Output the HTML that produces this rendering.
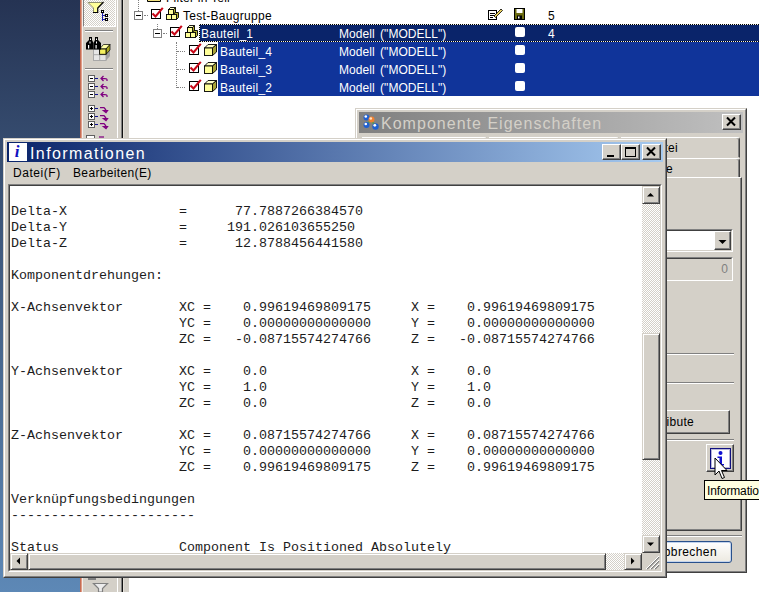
<!DOCTYPE html>
<html lang="de">
<head>
<meta charset="utf-8">
<title>Informationen</title>
<style>
*{box-sizing:border-box;margin:0;padding:0}
html,body{width:759px;height:592px;overflow:hidden;background:#fff}
body{position:relative;font-family:"Liberation Sans",sans-serif;font-size:12px;color:#000}
.abs{position:absolute}
#desk{left:0;top:0;width:80px;height:592px;background:linear-gradient(180deg,#253353 0px,#354b6e 138px,#48688f 360px,#5d88b6 592px)}
#orange{left:80px;top:0;width:2px;height:592px;background:linear-gradient(90deg,#b8553c,#ecb4a0)}
#tbar{left:82px;top:0;width:35px;height:592px;background:#d4d0c8;border-left:1px solid #f4f0ec}
#tstrip{left:117px;top:0;width:5px;height:592px;background:linear-gradient(90deg,#fff 0 1px,#d4d0c8 1px 4px,#808080 4px 5px)}
#tdark{left:122px;top:0;width:2px;height:592px;background:linear-gradient(90deg,#101010 0 1px,#e4e0d8 1px 2px)}
#tgap{left:124px;top:0;width:5px;height:592px;background:#d4d0c8}
#tree{left:129px;top:0;width:630px;height:592px;background:#fff}
.sep{left:85px;width:28px;height:2px;border-top:1px solid #808080;border-bottom:1px solid #fff}
.pressed{left:83px;top:-2px;width:33px;height:29px;border:1px solid;border-color:#808080 #fff #fff #808080;
 background-color:#fff;background-image:conic-gradient(#d4d0c8 25%,#fff 0 50%,#d4d0c8 0 75%,#fff 0);background-size:2px 2px}
.row{left:0;width:759px;height:18px;line-height:18px;font-size:12px;white-space:nowrap}
.sel{background:#10349a;color:#fff}
.sel1{background:#0a246a;color:#fff}
.t{position:absolute;top:1px;letter-spacing:.25px}
/* windows */
.win{background:#d4d0c8;border:1px solid;border-color:#d4d0c8 #404040 #404040 #d4d0c8}
.win>.in{position:absolute;left:0;top:0;right:0;bottom:0;border:1px solid;border-color:#fff #808080 #808080 #fff}
.btn{position:absolute;background:#d4d0c8;border:1px solid;border-color:#fff #404040 #404040 #fff;box-shadow:inset -1px -1px 0 #808080}
.sbtn{border-color:#d4d0c8 #404040 #404040 #d4d0c8;box-shadow:inset 1px 1px 0 #fff,inset -1px -1px 0 #808080}
.sunk{position:absolute;border:1px solid;border-color:#808080 #fff #fff #808080}
.sunk>.in2{position:absolute;left:0;top:0;right:0;bottom:0;border:1px solid;border-color:#404040 #d4d0c8 #d4d0c8 #404040}
.track{position:absolute;background-color:#fff;background-image:conic-gradient(#d4d0c8 25%,#fff 0 50%,#d4d0c8 0 75%,#fff 0);background-size:2px 2px}
pre{font-family:"Liberation Mono",monospace;font-size:13.33px;line-height:16px;letter-spacing:0;color:#1c1c1c}
.tab{border:1px solid;border-color:#fff #404040 #d4d0c8 #fff;border-radius:0 3px 0 0;box-shadow:inset -1px 0 0 #808080}
.hline{position:absolute;height:2px;border-top:1px solid #808080;border-bottom:1px solid #fff}
</style>
</head>
<body>
<div id="desk" class="abs"></div>
<div id="orange" class="abs"></div>
<div id="tbar" class="abs"></div>
<div id="tstrip" class="abs"></div>
<div id="tdark" class="abs"></div>
<div id="tgap" class="abs"></div>
<div id="tree" class="abs"></div>

<!-- TOOLBAR -->
<div class="abs pressed"></div>
<div class="abs sep" style="top:30px"></div>
<div class="abs sep" style="top:68px"></div>
<svg class="abs" style="left:82px;top:0" width="36" height="140" viewBox="0 0 36 140">
 <!-- funnel -->
 <path d="M6 2.500H21L15.500 8V12.500H11.500V8Z" fill="#ffff99"/>
 <path d="M11.500 12.500V8L6 2.500H21" fill="none" stroke="#909070" stroke-width="1"/>
 <path d="M21.500 2L15.700 8V12.500H11" fill="none" stroke="#000" stroke-width="1.200"/>
 <path d="M20.5 12 V21 M20.5 15.5 H24 M20.5 19.5 H24" stroke="#1a1aa8" stroke-width="1" fill="none"/>
 <rect x="19.5" y="10.5" width="2" height="2" fill="#fff" stroke="#000" stroke-width="1"/>
 <rect x="23.500" y="14.5" width="2" height="2" fill="#fff" stroke="#000" stroke-width="1"/>
 <rect x="23.500" y="18.5" width="2" height="2" fill="#fff" stroke="#000" stroke-width="1"/>
 <!-- binoculars + cube -->
 <g>
  <rect x="11.500" y="49" width="12.500" height="11.500" fill="#e6e6e6" stroke="#a8a8a8" stroke-width="1"/>
  <path d="M17.700 49V60.500M11.500 54.700H24" stroke="#a8a8a8" stroke-width="1" fill="none"/>
  <path d="M24 54.300L28 50V56L24 60.500Z" fill="#a0a0a0"/>
  <path d="M17.600 49L21.500 44.500H28L24 49Z" fill="#ffffa8" stroke="#000" stroke-width=".7"/>
  <path d="M24 49L28 44.500V50L24 54.300Z" fill="#a8a820" stroke="#000" stroke-width=".7"/>
  <rect x="17.600" y="49" width="6.400" height="5.300" fill="#f4f060" stroke="#000" stroke-width=".9"/>
  <path d="M7 37H10V40L11.500 43V49.600H4V43L7 40Z" fill="#000"/>
  <path d="M13 37H16V40L19 43V49.600H11.500V43L13 40Z" fill="#000"/>
  <rect x="6" y="45" width="1.200" height="3.500" fill="#fff"/><rect x="13.500" y="45" width="1.200" height="3.500" fill="#fff"/>
  <rect x="8" y="38.500" width="1" height="1.500" fill="#fff"/><rect x="14" y="38.500" width="1" height="1.500" fill="#fff"/>
  <rect x="7.500" y="41.500" width="1" height="2" fill="#fff"/><rect x="14" y="41.500" width="1" height="2" fill="#fff"/>
 </g>
 <!-- collapse -->
 <g fill="#fff" stroke="#606060" stroke-width="1">
  <rect x="6.500" y="75.500" width="6" height="6"/><rect x="6.500" y="83.500" width="6" height="6"/><rect x="6.500" y="91.500" width="6" height="6"/>
  <rect x="6.500" y="105.500" width="6" height="6"/><rect x="6.500" y="113.500" width="6" height="6"/><rect x="6.500" y="121.500" width="6" height="6"/>
  <rect x="4.500" y="135.500" width="8" height="8"/>
 </g>
 <g stroke="#000" stroke-width="1">
  <path d="M8 78.500H11M8 86.500H11M8 94.500H11"/>
  <path d="M8 108.500H11M9.500 107V110M8 116.500H11M9.500 115V118M8 124.500H11M9.500 123V126"/>
 </g>
 <g stroke="#101090" stroke-width="1"><path d="M13 78.500H16M13 86.500H16M13 94.500H16M13 108.500H16M13 116.500H16M13 124.500H16"/></g>
 <g stroke="#800080" stroke-width="1.250" fill="none">
  <path d="M25 81V79.500Q25 78.500 23 78.500H19M21.500 76L19 78.500L21.500 81"/>
  <path d="M25 89V87.500Q25 86.500 23 86.500H19M21.500 84L19 86.500L21.500 89"/>
  <path d="M25 97V95.500Q25 94.500 23 94.500H19M21.500 92L19 94.500L21.500 97"/>
  <path d="M18 107.500H22L24 110M21.500 110.500H25.500L24 112.500Z"/>
  <path d="M18 115.500H22L24 118M21.500 118.500H25.500L24 120.500Z"/>
  <path d="M18 123.500H22L24 126M21.500 126.500H25.500L24 128.500Z"/>
  <path d="M17 137H22"/>
 </g>
</svg>


<!-- bottom toolbar icon -->
<div class="abs" style="left:88px;top:578px;width:8px;height:2px;background:#808080"></div>
<svg class="abs" style="left:92px;top:582px" width="18" height="10" viewBox="0 0 18 10"><path d="M1.500 1.500H15.500L10.500 6.500V10H6.500V6.500Z" fill="#ececec" stroke="#808080" stroke-width="1.200"/></svg>
<!-- TREE ROWS -->
<div class="abs" style="left:138px;top:0;width:1px;height:11px;border-left:1px dotted #808080"></div>
<div class="abs" style="left:157px;top:24px;width:1px;height:5px;border-left:1px dotted #808080"></div>
<div class="abs" style="left:176px;top:42px;width:1px;height:46px;border-left:1px dotted #808080"></div>
<div class="abs" style="left:144px;top:15px;width:4px;height:1px;border-top:1px dotted #808080"></div>
<div class="abs" style="left:163px;top:33px;width:4px;height:1px;border-top:1px dotted #808080"></div>
<div class="abs" style="left:177px;top:51px;width:8px;height:1px;border-top:1px dotted #808080"></div>
<div class="abs" style="left:177px;top:69px;width:8px;height:1px;border-top:1px dotted #808080"></div>
<div class="abs" style="left:177px;top:87px;width:8px;height:1px;border-top:1px dotted #808080"></div>

<div class="abs row" style="top:-12px"><span class="t" style="left:166px">Filter in Teil</span></div>
<svg class="abs" style="left:147px;top:-9px" width="14" height="11" viewBox="0 0 14 11"><path d="M.5 2.500H5L6.500 4H13.500V10.500H.5Z" fill="#f0e080" stroke="#000"/></svg>

<div class="abs row" style="top:6px"><span class="t" style="left:183px;letter-spacing:.3px">Test-Baugruppe</span><span class="t" style="left:548px">5</span></div>
<div class="abs sel1" style="left:199px;top:24px;width:560px;height:18px"></div>
<div class="abs sel" style="left:218px;top:42px;width:541px;height:54px"></div>
<div class="abs" style="left:199px;top:24px;width:560px;height:1px;background:repeating-linear-gradient(90deg,#f4f4e8 0 1px,#000 1px 2px)"></div>
<div class="abs" style="left:199px;top:41px;width:560px;height:1px;background:repeating-linear-gradient(90deg,#f4f4e8 0 1px,#000 1px 2px)"></div>
<div class="abs" style="left:199px;top:24px;width:1px;height:18px;background:repeating-linear-gradient(180deg,#f4f4e8 0 1px,#000 1px 2px)"></div>
<div class="abs row" style="top:24px;color:#fff"><span class="t" style="left:201px">Bauteil_1</span><span class="t" style="left:339px;letter-spacing:.05px;word-spacing:2px">Modell ("MODELL")</span><span class="t" style="left:548px">4</span></div>
<div class="abs row" style="top:42px;color:#fff"><span class="t" style="left:220px">Bauteil_4</span><span class="t" style="left:339px;letter-spacing:.05px;word-spacing:2px">Modell ("MODELL")</span></div>
<div class="abs row" style="top:60px;color:#fff"><span class="t" style="left:220px">Bauteil_3</span><span class="t" style="left:339px;letter-spacing:.05px;word-spacing:2px">Modell ("MODELL")</span></div>
<div class="abs row" style="top:78px;color:#fff"><span class="t" style="left:220px">Bauteil_2</span><span class="t" style="left:339px;letter-spacing:.05px;word-spacing:2px">Modell ("MODELL")</span></div>
<div class="abs" style="left:134px;top:11px;width:9px;height:9px;border:1px solid #808080;background:#fff"><div class="abs" style="left:1px;top:3px;width:5px;height:1px;background:#000"></div></div>
<div class="abs" style="left:153px;top:29px;width:9px;height:9px;border:1px solid #808080;background:#fff"><div class="abs" style="left:1px;top:3px;width:5px;height:1px;background:#000"></div></div>
<div class="abs" style="left:515px;top:27px;width:10px;height:10px;background:#fff;border-radius:2px"></div>
<div class="abs" style="left:515px;top:45px;width:10px;height:10px;background:#fff;border-radius:2px"></div>
<div class="abs" style="left:515px;top:63px;width:10px;height:10px;background:#fff;border-radius:2px"></div>
<div class="abs" style="left:515px;top:81px;width:10px;height:10px;background:#fff;border-radius:2px"></div>
<svg class="abs" style="left:488px;top:8px" width="15" height="12" viewBox="0 0 15 12"><rect x=".5" y="2.500" width="8" height="9" fill="#fff" stroke="#000"/><path d="M2 5.500H7M2 7.500H7M2 9.500H5" stroke="#000"/><path d="M6 8L13 1L14.500 2.500L7.500 9.500Z" fill="#e8d060" stroke="#000" stroke-width=".8"/></svg>
<svg class="abs" style="left:514px;top:8px" width="12" height="12" viewBox="0 0 12 12"><rect x=".5" y=".5" width="10" height="11" fill="#6c6c10" stroke="#000"/><rect x="2.500" y="1" width="6" height="4" fill="#fff"/><rect x="3" y="7.500" width="5" height="4" fill="#000"/><rect x="4" y="8.500" width="1.500" height="2" fill="#fff"/></svg>


<svg class="abs" style="left:151px;top:7px" width="13" height="12" viewBox="0 0 13 12"><rect x=".5" y="2.500" width="9" height="9" fill="#fff" stroke="#000"/><path d="M1.500 6.500L4.500 9.500L11.800 .8" fill="none" stroke="#c80818" stroke-width="2.100"/></svg>
<svg class="abs" style="left:166px;top:7px" width="13" height="13" viewBox="0 0 13 13"><path d="M5.500 7.500L7.500 5.500H12.500V10.500L10.500 12.500Z" fill="#b4b030" stroke="#000" stroke-width=".9"/><path d="M2.500 2.500L4.500 .5H9.500V5L7.500 7.500H2.500Z" fill="#b4b030" stroke="#000" stroke-width=".9"/><path d="M2.500 2.500L4.500 .5H9.500L7.500 2.500Z" fill="#ffffc8" stroke="#000" stroke-width=".8"/><rect x="2.500" y="2.500" width="5" height="5" fill="#ffff99" stroke="#000" stroke-width=".9"/><rect x=".5" y="7.500" width="5" height="5" fill="#ffff99" stroke="#000" stroke-width=".9"/><rect x="5.500" y="7.500" width="5" height="5" fill="#ffff99" stroke="#000" stroke-width=".9"/></svg>
<svg class="abs" style="left:170px;top:25px" width="13" height="12" viewBox="0 0 13 12"><rect x=".5" y="2.500" width="9" height="9" fill="#fff" stroke="#000"/><path d="M1.500 6.500L4.500 9.500L11.800 .8" fill="none" stroke="#c80818" stroke-width="2.100"/></svg>
<svg class="abs" style="left:185px;top:25px" width="13" height="13" viewBox="0 0 13 13"><path d="M5.500 7.500L7.500 5.500H12.500V10.500L10.500 12.500Z" fill="#b4b030" stroke="#000" stroke-width=".9"/><path d="M2.500 2.500L4.500 .5H9.500V5L7.500 7.500H2.500Z" fill="#b4b030" stroke="#000" stroke-width=".9"/><path d="M2.500 2.500L4.500 .5H9.500L7.500 2.500Z" fill="#ffffc8" stroke="#000" stroke-width=".8"/><rect x="2.500" y="2.500" width="5" height="5" fill="#ffff99" stroke="#000" stroke-width=".9"/><rect x=".5" y="7.500" width="5" height="5" fill="#ffff99" stroke="#000" stroke-width=".9"/><rect x="5.500" y="7.500" width="5" height="5" fill="#ffff99" stroke="#000" stroke-width=".9"/></svg>
<svg class="abs" style="left:189px;top:43px" width="13" height="12" viewBox="0 0 13 12"><rect x=".5" y="2.500" width="9" height="9" fill="#fff" stroke="#000"/><path d="M1.500 6.500L4.500 9.500L11.800 .8" fill="none" stroke="#c80818" stroke-width="2.100"/></svg>
<svg class="abs" style="left:204px;top:44px" width="13" height="12" viewBox="0 0 13 12"><path d="M.5 4L4 .5H12.500L8.500 4Z" fill="#ffffc8" stroke="#000" stroke-width=".9"/><path d="M8.500 4L12.500 .5V8L8.500 11.500Z" fill="#a8a438" stroke="#000" stroke-width=".9"/><rect x=".5" y="4" width="8" height="7.500" fill="#ffff99" stroke="#000" stroke-width=".9"/></svg>
<svg class="abs" style="left:189px;top:61px" width="13" height="12" viewBox="0 0 13 12"><rect x=".5" y="2.500" width="9" height="9" fill="#fff" stroke="#000"/><path d="M1.500 6.500L4.500 9.500L11.800 .8" fill="none" stroke="#c80818" stroke-width="2.100"/></svg>
<svg class="abs" style="left:204px;top:62px" width="13" height="12" viewBox="0 0 13 12"><path d="M.5 4L4 .5H12.500L8.500 4Z" fill="#ffffc8" stroke="#000" stroke-width=".9"/><path d="M8.500 4L12.500 .5V8L8.500 11.500Z" fill="#a8a438" stroke="#000" stroke-width=".9"/><rect x=".5" y="4" width="8" height="7.500" fill="#ffff99" stroke="#000" stroke-width=".9"/></svg>
<svg class="abs" style="left:189px;top:79px" width="13" height="12" viewBox="0 0 13 12"><rect x=".5" y="2.500" width="9" height="9" fill="#fff" stroke="#000"/><path d="M1.500 6.500L4.500 9.500L11.800 .8" fill="none" stroke="#c80818" stroke-width="2.100"/></svg>
<svg class="abs" style="left:204px;top:80px" width="13" height="12" viewBox="0 0 13 12"><path d="M.5 4L4 .5H12.500L8.500 4Z" fill="#ffffc8" stroke="#000" stroke-width=".9"/><path d="M8.500 4L12.500 .5V8L8.500 11.500Z" fill="#a8a438" stroke="#000" stroke-width=".9"/><rect x=".5" y="4" width="8" height="7.500" fill="#ffff99" stroke="#000" stroke-width=".9"/></svg>
<!-- KOMP WINDOW -->
<div class="abs win" style="left:355px;top:108px;width:392px;height:465px"><div class="in"></div></div>
<div class="abs" style="left:359px;top:112px;width:384px;height:21px;background:linear-gradient(90deg,#808080,#c0c0c0)"></div>
<svg class="abs" style="left:362px;top:113px" width="18" height="18" viewBox="0 0 18 18">
 <path d="M4 4L9 7L4 12M9 7L14 14" stroke="#50a050" stroke-width="1.500" fill="none"/>
 <circle cx="4.500" cy="4.500" r="3" fill="#2060d0"/><circle cx="3.800" cy="3.500" r="1.300" fill="#fff"/>
 <circle cx="9.500" cy="6.500" r="3" fill="#f08030"/><circle cx="8.800" cy="5.500" r="1.300" fill="#ffe0c0"/>
 <circle cx="4.500" cy="12" r="3" fill="#2060d0"/><circle cx="3.800" cy="11" r="1.300" fill="#fff"/>
 <circle cx="13.500" cy="13.500" r="3.200" fill="#2060d0"/><circle cx="12.800" cy="12.300" r="1.400" fill="#fff"/>
</svg>
<div class="abs" style="left:381px;top:113px;height:21px;line-height:21px;font-size:16px;letter-spacing:1.02px;color:#d4d0c8;white-space:nowrap">Komponente Eigenschaften</div>
<div class="btn" style="left:722px;top:114px;width:19px;height:16px"></div>
<svg class="abs" style="left:722px;top:114px" width="19" height="16" viewBox="0 0 19 16"><path d="M5 3.500L13 11.500M13 3.500L5 11.500" stroke="#000" stroke-width="2"/></svg>
<!-- tabs -->
<div class="abs tab" style="left:362px;top:137px;width:125px;height:21px"></div>
<div class="abs tab" style="left:489px;top:137px;width:130px;height:21px"></div>
<div class="abs tab" style="left:621px;top:137px;width:119px;height:21px"></div>
<div class="abs tab" style="left:360px;top:158px;width:380px;height:20px"></div>
<div class="abs" style="right:81px;top:140px;line-height:16px;font-size:12px;letter-spacing:.3px">Datei</div>
<div class="abs" style="right:86px;top:161px;line-height:16px;font-size:12px;letter-spacing:.3px">Baugruppe</div>
<!-- tab panel -->
<div class="abs" style="left:600px;top:177px;width:142px;height:354px;border:1px solid;border-color:#fff #404040 #404040 #fff;box-shadow:inset -1px -1px 0 #808080"></div>
<!-- combo -->
<div class="sunk" style="left:600px;top:229px;width:133px;height:23px;background:#fff"><div class="in2"></div></div>
<div class="btn" style="left:714px;top:231px;width:17px;height:19px"></div>
<svg class="abs" style="left:714px;top:231px" width="17" height="19" viewBox="0 0 17 19"><path d="M4.500 9H12.500L8.500 13Z" fill="#000"/></svg>
<!-- disabled field -->
<div class="sunk" style="left:600px;top:257px;width:133px;height:24px"><div class="in2"></div></div>
<div class="abs" style="right:31px;top:261px;font-size:12px;line-height:16px;color:#808080">0</div>
<div class="hline" style="left:600px;top:353px;width:134px"></div>
<div class="hline" style="left:600px;top:382px;width:134px"></div>
<div class="hline" style="left:600px;top:439px;width:134px"></div>
<!-- attribute button -->
<div class="btn" style="left:600px;top:410px;width:130px;height:24px"></div>
<div class="abs" style="right:65px;top:414px;font-size:12px;line-height:16px;letter-spacing:.3px">Attribute</div>
<!-- info button -->
<div class="btn" style="left:706px;top:444px;width:28px;height:28px"></div>
<div class="abs" style="left:710px;top:448px;width:21px;height:21px;background:#fff;border:1px solid #101080;box-shadow:inset 0 0 0 1px rgba(16,16,128,.3)"></div>
<svg class="abs" style="left:710px;top:448px" width="21" height="21" viewBox="0 0 21 21"><circle cx="10.500" cy="5" r="2" fill="#1010d0"/><path d="M7.500 8.500H12V16H14V17.500H7.500V16H9.500V10H7.500Z" fill="#1010d0"/></svg>
<!-- bottom separator and Abbrechen -->
<div class="hline" style="left:600px;top:535px;width:142px"></div>
<div class="abs" style="left:600px;top:541px;width:132px;height:22px;border:1px solid #28508c;border-radius:3px;background:linear-gradient(180deg,#fff,#ece9e0);box-shadow:inset 0 0 0 1px #c4d4ec"></div>
<div class="abs" style="right:42px;top:544px;font-size:12px;line-height:16px;letter-spacing:.4px">Abbrechen</div>
<!-- tooltip -->
<div class="abs" style="left:704px;top:480px;width:60px;height:20px;background:#ffffe1;border:1px solid #000"></div>
<div class="abs" style="left:707px;top:483px;font-size:12px;line-height:16px;letter-spacing:-.15px;white-space:nowrap">Informationen</div>

<!-- INFO WINDOW -->
<div class="abs win" style="left:3px;top:138px;width:664px;height:440px"><div class="in"></div></div>
<div class="abs" style="left:7px;top:142px;width:656px;height:20px;background:linear-gradient(90deg,#0a246a,#a6caf0)"></div>
<div class="abs" style="left:9px;top:143px;width:18px;height:18px;background:#fff"></div>
<div class="abs" style="left:8px;top:142px;width:18px;height:20px;line-height:20px;text-align:center;font-family:'Liberation Serif',serif;font-style:italic;font-weight:bold;font-size:17px;color:#1010c0">i</div>
<div class="abs" style="left:30px;top:143px;height:20px;line-height:21px;font-size:16px;letter-spacing:1.4px;color:#fff;white-space:nowrap">Informationen</div>
<div class="btn" style="left:602px;top:144px;width:19px;height:16px"></div>
<div class="btn" style="left:621px;top:144px;width:19px;height:16px"></div>
<div class="btn" style="left:642px;top:144px;width:19px;height:16px"></div>
<svg class="abs" style="left:602px;top:144px" width="59" height="16" viewBox="0 0 59 16">
 <rect x="5" y="11" width="7" height="2" fill="#000"/>
 <rect x="23.500" y="3.500" width="10" height="9" fill="none" stroke="#000"/><rect x="23" y="3" width="11" height="2" fill="#000"/>
 <path d="M45 3.500L53 11.500M53 3.500L45 11.500" stroke="#000" stroke-width="2"/>
</svg>
<div class="abs" style="left:13px;top:165px;font-size:12px;line-height:16px;letter-spacing:.55px;white-space:nowrap">Datei(F)</div>
<div class="abs" style="left:73px;top:165px;font-size:12px;line-height:16px;letter-spacing:.35px;white-space:nowrap">Bearbeiten(E)</div>
<div class="sunk" style="left:8px;top:184px;width:654px;height:388px;background:#fff"><div class="in2"></div></div>
<!-- v scrollbar -->
<div class="track" style="left:642px;top:186px;width:18px;height:367px"></div>
<div class="btn sbtn" style="left:642px;top:186px;width:18px;height:18px"></div>
<div class="btn sbtn" style="left:642px;top:333px;width:18px;height:127px"></div>
<div class="btn sbtn" style="left:642px;top:535px;width:18px;height:18px"></div>
<svg class="abs" style="left:642px;top:186px" width="18" height="18" viewBox="0 0 18 18"><path d="M5 10.500H12L8.500 7Z" fill="#000"/></svg>
<svg class="abs" style="left:642px;top:535px" width="18" height="18" viewBox="0 0 18 18"><path d="M5 7.500H12L8.500 11Z" fill="#000"/></svg>
<!-- h scrollbar -->
<div class="track" style="left:10px;top:553px;width:632px;height:17px"></div>
<div class="btn sbtn" style="left:10px;top:553px;width:18px;height:17px"></div>
<div class="btn sbtn" style="left:28px;top:553px;width:578px;height:17px"></div>
<div class="btn sbtn" style="left:624px;top:553px;width:18px;height:17px"></div>
<svg class="abs" style="left:10px;top:553px" width="17" height="17" viewBox="0 0 17 17"><path d="M10 4.500V11.500L6.500 8Z" fill="#000"/></svg>
<svg class="abs" style="left:624px;top:553px" width="17" height="17" viewBox="0 0 17 17"><path d="M7 4.500V11.500L10.500 8Z" fill="#000"/></svg>
<!-- size grip -->
<div class="abs" style="left:642px;top:553px;width:18px;height:17px;background:#d4d0c8"></div>
<svg class="abs" style="left:643px;top:553px" width="17" height="17" viewBox="0 0 17 17"><path d="M4 16L16 4M8 16L16 8M12 16L16 12" stroke="#808080" stroke-width="1.500"/><path d="M3 16L16 3M7 16L16 7M11 16L16 11" stroke="#fff" stroke-width="1"/></svg>
<pre class="abs" style="left:11px;top:204px">Delta-X              =      77.7887266384570
Delta-Y              =     191.026103655250
Delta-Z              =      12.8788456441580

Komponentdrehungen:

X-Achsenvektor       XC =    0.99619469809175     X =    0.99619469809175
                     YC =    0.00000000000000     Y =    0.00000000000000
                     ZC =   -0.08715574274766     Z =   -0.08715574274766

Y-Achsenvektor       XC =    0.0                  X =    0.0
                     YC =    1.0                  Y =    1.0
                     ZC =    0.0                  Z =    0.0

Z-Achsenvektor       XC =    0.08715574274766     X =    0.08715574274766
                     YC =    0.00000000000000     Y =    0.00000000000000
                     ZC =    0.99619469809175     Z =    0.99619469809175

Verknüpfungsbedingungen
-----------------------

Status               Component Is Positioned Absolutely</pre>
<!-- cursor -->
<svg class="abs" style="left:714px;top:457px" width="14" height="23" viewBox="0 0 14 23"><path d="M1 1V18L5 14L8 21.500L10.500 20.500L7.500 13.500H13Z" fill="#fff" stroke="#000" stroke-width="1"/></svg>

</body>
</html>
